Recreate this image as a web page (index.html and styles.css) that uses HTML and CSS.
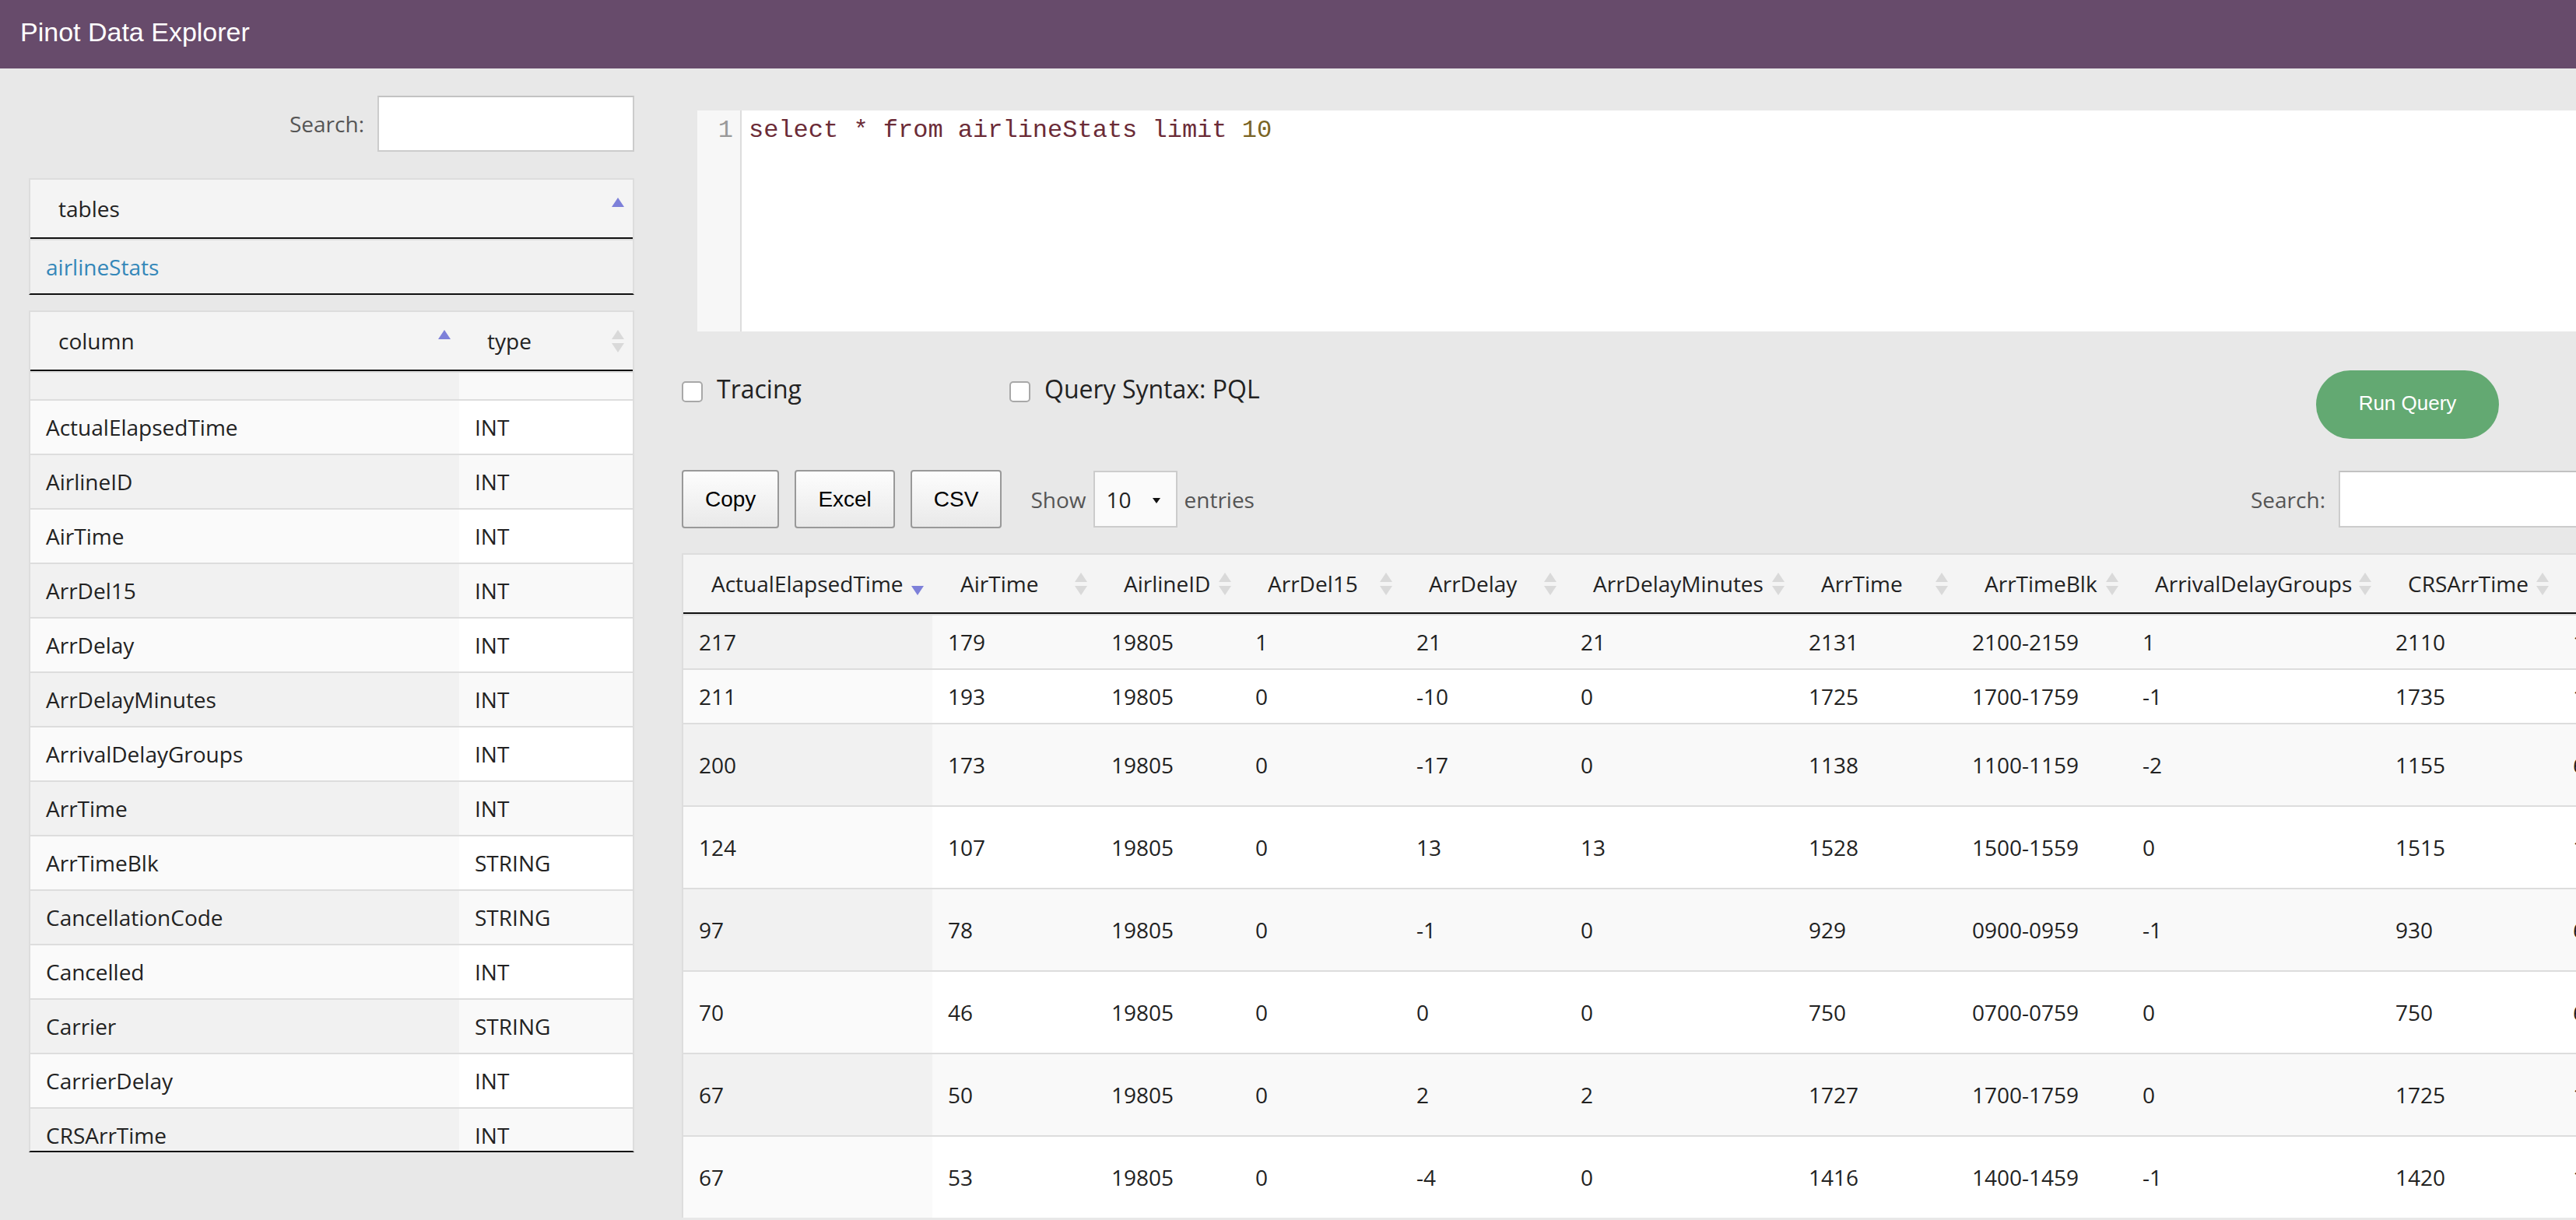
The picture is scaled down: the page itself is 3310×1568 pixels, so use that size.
FILE: index.html
```html
<!DOCTYPE html>
<html lang="en">
<head>
<meta charset="utf-8">
<title>Pinot Data Explorer</title>
<link rel="stylesheet" href="styles.css">
</head>
<body>
<header class="topbar"><span class="brand">Pinot Data Explorer</span></header>
<main class="layout">
  <aside class="sidebar">
    <div class="filter"><label>Search:</label><input class="search-box" type="text"></div>

    <div class="dt tables-dt">
      <div class="dt-head">
        <table>
          <thead><tr><th class="sort asc">tables</th></tr></thead>
        </table>
      </div>
      <div class="dt-body">
        <table>
          <tbody><tr class="odd"><td class="sorted"><a class="link">airlineStats</a></td></tr></tbody>
        </table>
      </div>
    </div>

    <div class="dt columns-dt">
      <div class="dt-head">
        <table>
          <colgroup><col class="sc1"><col class="sc2"></colgroup>
          <thead><tr><th class="sort asc">column</th><th class="sort">type</th></tr></thead>
        </table>
      </div>
      <div class="dt-body scroll">
        <table>
          <colgroup><col class="sc1"><col class="sc2"></colgroup>
          <tbody>
            <tr class="odd spacer"><td class="sorted"></td><td></td></tr>
            <tr class="even"><td class="sorted">ActualElapsedTime</td><td>INT</td></tr>
            <tr class="odd"><td class="sorted">AirlineID</td><td>INT</td></tr>
            <tr class="even"><td class="sorted">AirTime</td><td>INT</td></tr>
            <tr class="odd"><td class="sorted">ArrDel15</td><td>INT</td></tr>
            <tr class="even"><td class="sorted">ArrDelay</td><td>INT</td></tr>
            <tr class="odd"><td class="sorted">ArrDelayMinutes</td><td>INT</td></tr>
            <tr class="even"><td class="sorted">ArrivalDelayGroups</td><td>INT</td></tr>
            <tr class="odd"><td class="sorted">ArrTime</td><td>INT</td></tr>
            <tr class="even"><td class="sorted">ArrTimeBlk</td><td>STRING</td></tr>
            <tr class="odd"><td class="sorted">CancellationCode</td><td>STRING</td></tr>
            <tr class="even"><td class="sorted">Cancelled</td><td>INT</td></tr>
            <tr class="odd"><td class="sorted">Carrier</td><td>STRING</td></tr>
            <tr class="even"><td class="sorted">CarrierDelay</td><td>INT</td></tr>
            <tr class="odd"><td class="sorted">CRSArrTime</td><td>INT</td></tr>
            <tr class="even"><td class="sorted">CRSDepTime</td><td>INT</td></tr>
          </tbody>
        </table>
      </div>
    </div>
  </aside>

  <section class="workspace">
    <div class="editor">
      <div class="gutter">1</div>
      <div class="code">select * from airlineStats limit <span class="num">10</span></div>
    </div>

    <div class="options">
      <label class="option opt-tracing"><span class="checkbox"></span><span class="opt-text">Tracing</span></label>
      <label class="option"><span class="checkbox"></span><span class="opt-text">Query Syntax: PQL</span></label>
      <button class="run-btn">Run Query</button>
    </div>

    <div class="toolbar">
      <button class="dt-btn">Copy</button>
      <button class="dt-btn">Excel</button>
      <button class="dt-btn">CSV</button>
      <div class="length">Show <span class="length-select">10<span class="caret"></span></span> entries</div>
      <div class="filter right-filter"><label>Search:</label><input class="search-box wide" type="text"></div>
    </div>

    <div class="results">
      <table class="grid">
        <colgroup>
          <col class="c1"><col class="c2"><col class="c3"><col class="c4"><col class="c5"><col class="c6"><col class="c7"><col class="c8"><col class="c9"><col class="c10"><col class="c11">
        </colgroup>
        <thead>
          <tr>
            <th class="sort desc">ActualElapsedTime</th>
            <th class="sort">AirTime</th>
            <th class="sort">AirlineID</th>
            <th class="sort">ArrDel15</th>
            <th class="sort">ArrDelay</th>
            <th class="sort">ArrDelayMinutes</th>
            <th class="sort">ArrTime</th>
            <th class="sort">ArrTimeBlk</th>
            <th class="sort">ArrivalDelayGroups</th>
            <th class="sort">CRSArrTime</th>
            <th class="sort">CRSDepTime</th>
          </tr>
        </thead>
        <tbody>
          <tr class="odd"><td class="sorted">217</td><td>179</td><td>19805</td><td>1</td><td>21</td><td>21</td><td>2131</td><td>2100-2159</td><td>1</td><td>2110</td><td>1753</td></tr>
          <tr class="even"><td class="sorted">211</td><td>193</td><td>19805</td><td>0</td><td>-10</td><td>0</td><td>1725</td><td>1700-1759</td><td>-1</td><td>1735</td><td>1424</td></tr>
          <tr class="odd tall"><td class="sorted">200</td><td>173</td><td>19805</td><td>0</td><td>-17</td><td>0</td><td>1138</td><td>1100-1159</td><td>-2</td><td>1155</td><td>655</td></tr>
          <tr class="even tall"><td class="sorted">124</td><td>107</td><td>19805</td><td>0</td><td>13</td><td>13</td><td>1528</td><td>1500-1559</td><td>0</td><td>1515</td><td>1311</td></tr>
          <tr class="odd tall"><td class="sorted">97</td><td>78</td><td>19805</td><td>0</td><td>-1</td><td>0</td><td>929</td><td>0900-0959</td><td>-1</td><td>930</td><td>653</td></tr>
          <tr class="even tall"><td class="sorted">70</td><td>46</td><td>19805</td><td>0</td><td>0</td><td>0</td><td>750</td><td>0700-0759</td><td>0</td><td>750</td><td>640</td></tr>
          <tr class="odd tall"><td class="sorted">67</td><td>50</td><td>19805</td><td>0</td><td>2</td><td>2</td><td>1727</td><td>1700-1759</td><td>0</td><td>1725</td><td>1618</td></tr>
          <tr class="even tall"><td class="sorted">67</td><td>53</td><td>19805</td><td>0</td><td>-4</td><td>0</td><td>1416</td><td>1400-1459</td><td>-1</td><td>1420</td><td>1313</td></tr>
        </tbody>
      </table>
    </div>
  </section>
</main>
</body>
</html>
```

FILE: styles.css
```css
* { box-sizing: border-box; }

html, body {
  margin: 0;
  overflow: hidden;
}

body {
  width: 3310px;
  height: 1568px;
  background: #e8e8e8;
  font-family: "Open Sans", "DejaVu Sans", sans-serif;
  font-size: 28px;
  color: #222;
}

/* ---------- top bar ---------- */
.topbar {
  height: 88px;
  background: #674b6b;
  display: flex;
  align-items: center;
  padding: 0 0 6px 26px;
}

.brand {
  font-family: "Liberation Sans", Arial, sans-serif;
  font-size: 34px;
  color: #fff;
  line-height: 1;
}

/* ---------- layout ---------- */
.layout {
  display: flex;
  align-items: flex-start;
}

.sidebar {
  flex: none;
  width: 778px;
  margin-left: 37px;
  padding-top: 35px;
}

.workspace {
  flex: none;
  width: 2461px;
  margin-left: 61px;
}

/* ---------- search filter ---------- */
.filter {
  display: flex;
  justify-content: flex-end;
  align-items: center;
  gap: 17px;
}

.filter label {
  color: #555;
  line-height: 36px;
}

.search-box {
  width: 330px;
  height: 72px;
  border: 2px solid #ccc;
  border-top-color: #c2c2c2;
  background: #fff;
  padding: 0 8px;
  font: inherit;
  outline: none;
}

.search-box.wide {
  width: 332px;
  height: 73px;
}

/* ---------- datatables ---------- */
table {
  border-collapse: separate;
  border-spacing: 0;
  table-layout: fixed;
  width: 100%;
}

th {
  position: relative;
  text-align: left;
  font-weight: normal;
  padding: 19px 36px;
  line-height: 36px;
  border-bottom: 2px solid #111;
  background: #f4f4f4;
  white-space: nowrap;
}

td {
  padding: 16px 20px;
  line-height: 36px;
  border-top: 2px solid #ddd;
  white-space: nowrap;
}

tr.odd td { background: #f9f9f9; }
tr.odd td.sorted { background: #f1f1f1; }
tr.even td { background: #fff; }
tr.even td.sorted { background: #fafafa; }

tr.spacer td {
  padding: 0;
  height: 36px;
  line-height: 0;
}

th.sort::before,
th.sort::after {
  content: "";
  position: absolute;
  right: 11px;
  width: 0;
  height: 0;
  border-left: 8px solid transparent;
  border-right: 8px solid transparent;
}

th.sort::before {
  top: calc(50% - 14px);
  border-bottom: 12px solid #d9d9d9;
}

th.sort::after {
  top: calc(50% + 3px);
  border-top: 12px solid #d9d9d9;
}

th.asc::before { border-bottom-color: #7d80d9; }
th.asc::after { display: none; }
th.desc::after { border-top-color: #7d80d9; }
th.desc::before { display: none; }

.dt-head {
  border: 2px solid #ddd;
  border-bottom: none;
}

.dt-body {
  border-left: 2px solid #ddd;
  border-right: 2px solid #ddd;
  border-bottom: 2px solid #111;
  overflow: hidden;
}

.dt-body.scroll { height: 1004px; }

.tables-dt { margin-top: 34px; }
.columns-dt { margin-top: 20px; }

.sc1 { width: 551px; }
.sc2 { width: 223px; }

.link {
  color: #3487b9;
  text-decoration: none;
}

/* ---------- editor ---------- */
.editor {
  display: flex;
  height: 284px;
  margin: 54px 0 0 20px;
  background: #fff;
}

.gutter {
  flex: none;
  width: 57px;
  background: #f7f7f7;
  border-right: 2px solid #ddd;
  color: #999;
  text-align: right;
  padding: 8px 9px 0 0;
  font-family: "Liberation Mono", monospace;
  font-size: 32px;
  line-height: 36px;
}

.code {
  padding: 8px 0 0 9px;
  font-family: "Liberation Mono", "Courier New", monospace;
  font-size: 32px;
  line-height: 36px;
  color: #6b2b37;
  white-space: pre;
}

.num { color: #7a6424; }

/* ---------- options ---------- */
.options {
  display: flex;
  align-items: flex-start;
  height: 88px;
  margin-top: 50px;
}

.option {
  display: flex;
  align-items: center;
  gap: 18px;
  margin-top: 14px;
  font-size: 32px;
  line-height: 27px;
  color: #222;
}

.opt-text {
  position: relative;
  top: -4px;
}

.opt-tracing { width: 421px; }

.checkbox {
  flex: none;
  width: 27px;
  height: 27px;
  border: 2px solid #a8a8a8;
  border-radius: 5px;
  background: #fff;
}

.run-btn {
  margin-left: auto;
  margin-right: 126px;
  width: 235px;
  height: 88px;
  border: none;
  border-radius: 44px;
  background: #63a972;
  color: #fff;
  font-family: "Liberation Sans", Arial, sans-serif;
  font-size: 26px;
  padding: 0 0 4px;
}

/* ---------- toolbar ---------- */
.toolbar {
  display: flex;
  align-items: center;
  height: 75px;
  margin-top: 40px;
}

.dt-btn {
  height: 75px;
  margin-right: 20px;
  padding: 0 28px;
  border: 2px solid #999;
  border-radius: 4px;
  background: linear-gradient(#fdfdfd, #e9e9e9);
  color: #000;
  font-family: "Liberation Sans", Arial, sans-serif;
  font-size: 28px;
}

.length {
  display: flex;
  align-items: center;
  gap: 9px;
  margin-left: 17px;
  color: #555;
}

.length-select {
  position: relative;
  display: flex;
  align-items: center;
  width: 108px;
  height: 73px;
  padding-left: 15px;
  border: 2px solid #ccc;
  background: #fafafa;
  color: #222;
}

.caret {
  position: absolute;
  right: 20px;
  top: 33px;
  width: 0;
  height: 0;
  border-left: 5px solid transparent;
  border-right: 5px solid transparent;
  border-top: 7px solid #111;
}

.right-filter { margin-left: auto; }

/* ---------- results grid ---------- */
.results {
  margin-top: 32px;
  overflow: hidden;
  border-left: 2px solid #ddd;
}

.grid {
  width: 2648px;
}

.grid thead th { border-top: 2px solid #ddd; }

.grid tr.tall td {
  height: 106px;
  box-sizing: border-box;
}

.c1 { width: 320px; }
.c2 { width: 210px; }
.c3 { width: 185px; }
.c4 { width: 207px; }
.c5 { width: 211px; }
.c6 { width: 293px; }
.c7 { width: 210px; }
.c8 { width: 219px; }
.c9 { width: 325px; }
.c10 { width: 228px; }
.c11 { width: 240px; }
```
